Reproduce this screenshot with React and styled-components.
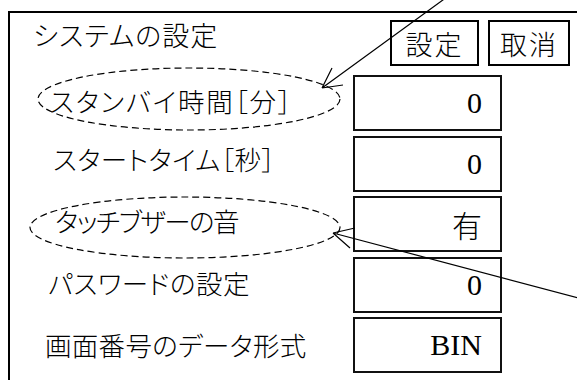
import React from 'react';
import styled, { createGlobalStyle } from 'styled-components';

const Global = createGlobalStyle`
  html, body { margin: 0; padding: 0; background: #fff; }
  body { font-family: "Noto Sans CJK JP", sans-serif; color: #000; }
`;

const Page = styled.div`
  position: relative;
  width: 577px;
  height: 380px;
  overflow: hidden;
  padding: 11px 0 0 8px;
  box-sizing: border-box;
`;

const Frame = styled.section`
  border-top: 2px solid #000;
  border-left: 2px solid #000;
  height: 100%;
  box-sizing: border-box;
  display: flex;
  flex-direction: column;
  gap: 4.5px;
`;

const Header = styled.div`
  display: flex;
  align-items: flex-start;
  height: 57.5px;
`;

const Title = styled.h1`
  margin: 0;
  padding: 8px 0 0 23px;
  font-size: 27px;
  line-height: 27px;
  font-weight: 300;
  font-feature-settings: "palt";
  letter-spacing: 1px;
`;

const Buttons = styled.div`
  margin: 7px 7px 0 auto;
  display: flex;
  gap: 9px;
`;

const Button = styled.button`
  width: ${p => p.$w}px;
  height: 46px;
  box-sizing: border-box;
  border: 2.5px solid #000;
  background: #fff;
  padding: 0;
  font-family: "Noto Sans CJK JP", sans-serif;
  font-weight: 300;
  font-size: 27px;
  line-height: 1;
  color: #000;
  letter-spacing: 2px;
`;

const Row = styled.div`
  display: grid;
  grid-template-columns: 343px 149px;
  height: 56px;
`;

const Label = styled.div`
  align-self: center;
  padding-left: ${p => p.$indent}px;
  font-size: 26.5px;
  line-height: 30px;
  font-weight: 300;
  font-feature-settings: "palt";
  letter-spacing: ${p => p.$ls}px;
  white-space: nowrap;
  transform: translateY(${p => p.$shift || 0}px);
`;

const Value = styled.div`
  box-sizing: border-box;
  height: 56px;
  border: 2px solid #111;
  display: flex;
  align-items: center;
  justify-content: flex-end;
  padding-right: 18px;
  font-family: "Liberation Serif", "Noto Sans CJK JP", serif;
  font-size: 30px;
  font-weight: 300;
`;

const Overlay = styled.svg`
  position: absolute;
  left: 0;
  top: 0;
  pointer-events: none;
`;

const rows = [
  { label: 'スタンバイ時間［分］', value: '0', indent: 40, shift: -2, ls: 1.8 },
  { label: 'スタートタイム［秒］', value: '0', indent: 43, shift: -5, ls: 0.5 },
  { label: 'タッチブザーの音', value: '有', indent: 45, shift: -3, ls: -1.5 },
  { label: 'パスワードの設定', value: '0', indent: 38, shift: -2, ls: 0.5 },
  { label: '画面番号のデータ形式', value: 'BIN', indent: 35, shift: 0, ls: 0.3 },
];

export default function App() {
  return (
    <>
      <Global />
      <Page>
        <Frame>
          <Header>
            <Title>システムの設定</Title>
            <Buttons>
              <Button $w={89}>設定</Button>
              <Button $w={82}>取消</Button>
            </Buttons>
          </Header>
          {rows.map(r => (
            <Row key={r.label}>
              <Label $indent={r.indent} $shift={r.shift} $ls={r.ls}>{r.label}</Label>
              <Value>{r.value}</Value>
            </Row>
          ))}
        </Frame>
        <Overlay width="577" height="380" viewBox="0 0 577 380">
          <g fill="none" stroke="#000" strokeWidth="1.2">
            <ellipse cx="189" cy="99" rx="151" ry="31" strokeDasharray="7 4" />
            <ellipse cx="185" cy="227.5" rx="155" ry="30.5" strokeDasharray="7 4" />
            <path d="M447 -3 L322 88 M322 88 L332 68 M322 88 L343 85" />
            <path d="M590 301 L333 233 M333 233 L355 228 M333 233 L350 248" />
          </g>
        </Overlay>
      </Page>
    </>
  );
}
